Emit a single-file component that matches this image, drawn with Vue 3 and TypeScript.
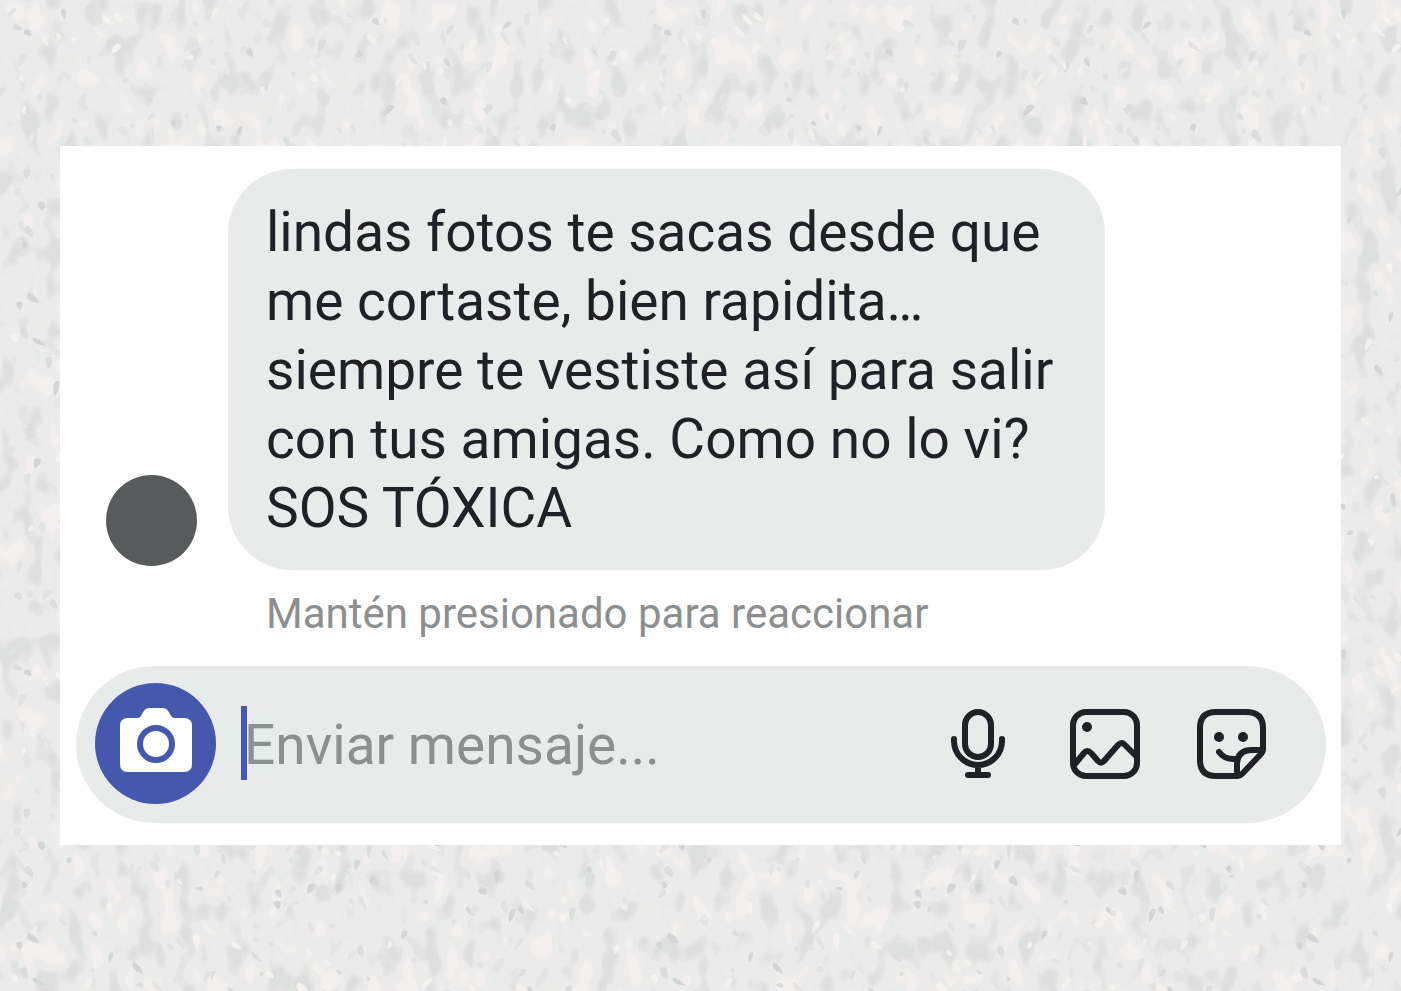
<script setup lang="ts">
import { ref } from 'vue'

interface Fleck {
  d: string
  fill: string
}

const message = `lindas fotos te sacas desde que
me cortaste, bien rapidita…
siempre te vestiste así para salir
con tus amigas. Como no lo vi?
SOS TÓXICA`

const draft = ref('')

// Deterministic generator so that the stone pattern is stable between renders.
let seed = 4217
function random(): number {
  seed = (seed * 16807) % 2147483647
  return seed / 2147483647
}

const tones = ['#dcdedd', '#e2e3e2', '#e3e4e3', '#f5f2f0', '#f3f0ee', '#e6eae8', '#d4d6d5', '#e2e4e3']

function makeFleck(): Fleck {
  const x = 12 + random() * 616
  const y = 12 + random() * 616
  const angle = Math.PI / 2 + (random() - 0.5) * 2
  const length = 2 + random() * 6
  const width = 2 + random() * 2
  const dx = Math.cos(angle) * length
  const dy = Math.sin(angle) * length
  const nx = -Math.sin(angle) * width
  const ny = Math.cos(angle) * width
  const p = (a: number, b: number) => `${(x + a).toFixed(1)} ${(y + b).toFixed(1)}`
  return {
    d: `M${p(-dx, -dy)}C${p(nx * 2 - dx, ny * 2 - dy)} ${p(nx * 2, ny * 2)} ${p(dx, dy)}Q${p(-nx, -ny)} ${p(-dx, -dy)}Z`,
    fill: tones[Math.floor(random() * tones.length)],
  }
}

const flecks: Fleck[] = Array.from({ length: 640 }, makeFleck)
</script>

<template>
  <main class="page">
    <svg class="stone" aria-hidden="true">
      <defs>
        <filter id="mottle" x="0" y="0" width="100%" height="100%" color-interpolation-filters="sRGB">
          <feTurbulence type="fractalNoise" baseFrequency="0.045 0.03" numOctaves="2" seed="8" />
          <feColorMatrix values="2.2 0 0 0 -0.6  2.2 0 0 0 -0.6  2.2 0 0 0 -0.6  0 0 0 0 1" />
          <feComponentTransfer>
            <feFuncR type="discrete" tableValues="0.87 0.885 0.9 0.912 0.925 0.932 0.915 0.93 0.945 0.955" />
            <feFuncG type="discrete" tableValues="0.875 0.888 0.902 0.922 0.928 0.929 0.927 0.927 0.935 0.945" />
            <feFuncB type="discrete" tableValues="0.873 0.885 0.898 0.915 0.922 0.922 0.919 0.92 0.928 0.94" />
          </feComponentTransfer>
        </filter>
        <pattern id="flecks" width="640" height="640" patternUnits="userSpaceOnUse">
          <path v-for="(fleck, i) in flecks" :key="i" :d="fleck.d" :fill="fleck.fill" />
        </pattern>
      </defs>
      <rect width="100%" height="100%" filter="url(#mottle)" />
      <rect width="100%" height="100%" fill="url(#flecks)" />
    </svg>

    <section class="card">
      <div class="row">
        <span class="avatar"></span>
        <p class="bubble">{{ message }}</p>
      </div>
      <p class="hint">Mantén presionado para reaccionar</p>

      <form class="composer" @submit.prevent>
        <button class="camera" type="button" aria-label="Cámara">
          <svg viewBox="0 0 72 72">
            <path d="M8 10h9c3 0 4-2 5-4 2-4 4-6 8-6h12c4 0 6 2 8 6 1 2 2 4 5 4h9q8 0 8 8v38q0 8-8 8H8q-8 0-8-8V18q0-8 8-8Z" fill="#fff" />
            <circle cx="36" cy="36" r="16" fill="none" stroke="#4459ae" stroke-width="6" />
          </svg>
        </button>
        <div class="field">
          <span class="caret"></span>
          <input v-model="draft" type="text" placeholder="Enviar mensaje..." aria-label="Enviar mensaje" />
        </div>
        <div class="tools">
          <button type="button" aria-label="Grabar audio">
            <svg class="line" viewBox="0 0 72 72">
              <rect x="23" y="4" width="26" height="45" rx="13" />
              <path d="M12 31v2a24 24 0 0 0 48 0v-2M36 57v9M26 67h20" />
            </svg>
          </button>
          <button type="button" aria-label="Galería">
            <svg class="line" viewBox="0 0 72 72">
              <rect x="4" y="4" width="64" height="64" rx="13" />
              <path d="M6 56 15 45q3-4 7 0l7 8q3 3 6 0l14-16q4-4 7 0l11 11" />
              <circle class="dot" cx="18" cy="19" r="5" />
            </svg>
          </button>
          <button type="button" aria-label="Stickers">
            <svg class="line" viewBox="0 0 72 72">
              <path d="M42 68H20Q4 68 4 52V20Q4 4 20 4h30q17 0 17 16v21q0 3-3 6L46 66q-2 2-4 2Z" />
              <path d="M41 67V57q0-15 15-15h10M23 44q6 8 17 7" />
              <circle class="dot" cx="23" cy="29" r="5" />
              <circle class="dot" cx="47" cy="29" r="5" />
            </svg>
          </button>
        </div>
      </form>
    </section>
  </main>
</template>

<style>
body {
  margin: 0;
}
</style>

<style scoped>
.page {
  position: relative;
  box-sizing: border-box;
  min-height: 100vh;
  padding: 24px 60px;
  display: flex;
  align-items: center;
  background: #ebedeb;
  font-family: Roboto, "Liberation Sans", sans-serif;
}

.stone {
  position: absolute;
  inset: 0;
  width: 100%;
  height: 100%;
}

.card {
  position: relative;
  box-sizing: border-box;
  width: 100%;
  padding: 23px 15px 22px 16px;
  background: #fff;
}

.row {
  display: flex;
  align-items: flex-end;
  gap: 31px;
  padding-left: 30px;
}

.avatar {
  flex: none;
  width: 91px;
  height: 91px;
  margin-bottom: 4px;
  border-radius: 50%;
  background: #575b5c;
}

.bubble {
  margin: 0;
  padding: 29px 52px 27px 38px;
  border-radius: 64px;
  background: #e9ebea;
  color: #1d2226;
  font-size: 55px;
  line-height: 69px;
  white-space: pre-line;
}

.hint {
  margin: 20px 0 28px;
  padding-left: 190px;
  color: #8c8f90;
  font-size: 42px;
  line-height: 48px;
}

.composer {
  box-sizing: border-box;
  min-height: 157px;
  display: flex;
  align-items: center;
  padding: 0 58px 2px 19px;
  border-radius: 80px;
  background: #e9ebea;
}

button {
  flex: none;
  padding: 0;
  border: 0;
  background: none;
  cursor: pointer;
}

svg {
  display: block;
}

.camera {
  width: 121px;
  height: 121px;
  display: grid;
  place-items: center;
  border-radius: 50%;
  background: #4459ae;
}

.camera svg,
.tools svg {
  width: 72px;
  height: 72px;
}

.field {
  position: relative;
  flex: 1;
  min-width: 0;
  padding-left: 28px;
}

.caret {
  position: absolute;
  left: 25px;
  top: 0;
  width: 6px;
  height: 74px;
  background: #4459ae;
}

input {
  display: block;
  box-sizing: border-box;
  width: 100%;
  height: 76px;
  padding: 2px 0 0;
  border: 0;
  outline: 0;
  background: none;
  color: #1d2226;
  font: 55px Roboto, "Liberation Sans", sans-serif;
}

input::placeholder {
  color: #8c8f90;
  opacity: 1;
}

.tools {
  display: flex;
  gap: 55px;
}

.line {
  fill: none;
  stroke: #1d2226;
  stroke-width: 6;
  stroke-linecap: round;
  stroke-linejoin: round;
}

.line .dot {
  fill: #1d2226;
  stroke: none;
}
</style>
